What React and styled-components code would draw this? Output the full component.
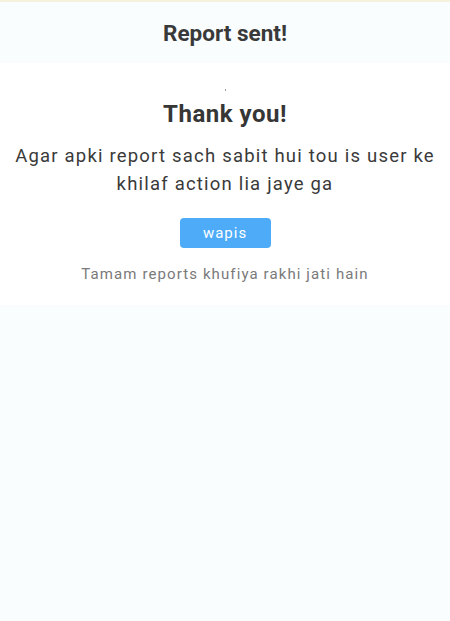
import React from 'react'
import styled, { createGlobalStyle } from 'styled-components'

const GlobalStyle = createGlobalStyle`
  html, body {
    margin: 0;
    padding: 0;
    background: #f9fdfd;
    font-family: Roboto, "Liberation Sans", sans-serif;
  }
`

const App = () => {
  return (
    <Page>
      <GlobalStyle />
      <TopLine />
      <Header>
        <Title>Report sent!</Title>
      </Header>
      <Panel>
        <Dot />
        <Heading>Thank you!</Heading>
        <Message>Agar apki report sach sabit hui tou is user ke khilaf action lia jaye ga</Message>
        <Button>wapis</Button>
        <Note>Tamam reports khufiya rakhi jati hain</Note>
      </Panel>
    </Page>
  )
}

export default App

const Page = styled.div`
  width: 450px;
  min-height: 621px;
  background: #f9fdfd;
  display: flex;
  flex-direction: column;
`
const TopLine = styled.div`
  height: 2px;
  background: #f4f1dd;
`
const Header = styled.div`
  height: 61px;
  display: flex;
  align-items: center;
  justify-content: center;
  background: #f9fdfd;
`
const Title = styled.h1`
  margin: 0;
  font-size: 22.5px;
  font-weight: 700;
  color: #393939;
`
const Panel = styled.div`
  background: #ffffff;
  display: flex;
  flex-direction: column;
  align-items: center;
  padding: 26px 14px 20px;
`
const Dot = styled.div`
  width: 1px;
  height: 2px;
  background: #999;
  margin-bottom: 8px;
`
const Heading = styled.h2`
  margin: 0;
  font-size: 24px;
  font-weight: 700;
  color: #363636;
  letter-spacing: 0.5px;
  line-height: 30px;
`
const Message = styled.p`
  margin: 13px 0 0;
  font-size: 18.5px;
  line-height: 28px;
  letter-spacing: 1.2px;
  color: #3a3a3a;
  text-align: center;
`
const Button = styled.button`
  margin-top: 20px;
  width: 91px;
  height: 30px;
  border: none;
  border-radius: 4px;
  background: #4dabf7;
  color: #fff;
  font-family: Roboto, "Liberation Sans", sans-serif;
  font-size: 15px;
  letter-spacing: 1px;
`
const Note = styled.p`
  margin: 15px 0 0;
  font-size: 15px;
  line-height: 22px;
  letter-spacing: 1.1px;
  color: #7a7a7a;
`
